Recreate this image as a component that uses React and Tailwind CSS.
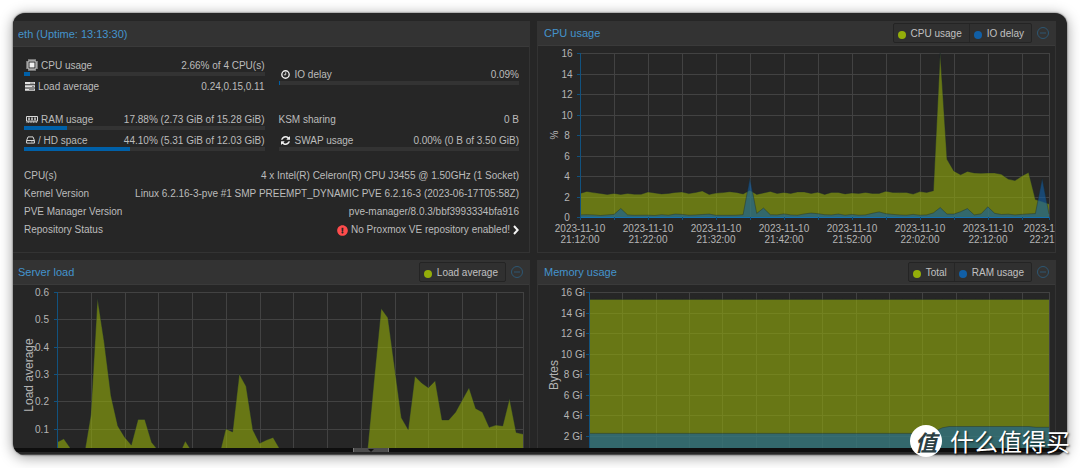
import React from "react";
import { FaExclamationCircle } from "react-icons/fa";

const GREEN = "#94ae0a";
const BLUE = "#115fa6";
const TOP = 7;
const BOTTOM = 171;
const SAMPLES = 69;

const CPU = [
  2.3, 2.5, 2.38, 2.3, 2.2, 2.3, 2.2, 2.3, 2.22, 2.22, 2.45, 2.35, 2.25, 2.3, 2.4, 2.45, 2.28, 2.4, 2.55, 2.2,
  2.33, 2.38, 2.47, 2.4, 2.25, 2.6, 2.2, 2.35, 2.5, 2.3, 2.4, 2.3, 2.45, 2.45, 2.3, 2.42, 2.2, 2.4, 2.4, 2.25,
  2.35, 2.3, 2.4, 2.3, 2.3, 2.52, 2.4, 2.38, 2.4, 2.23, 2.48, 2.4, 2.56, 16, 5.63, 4.5, 4.13, 4.45, 4.3, 4.27,
  4.3, 4.3, 4.17, 3.7, 3.55, 4.0, 4.35, 1.7, 1.5, 1.27,
];
const IO = [
  0.2, 0.22, 0.2, 0.15, 0.2, 0.25, 0.83, 0.2, 0.17, 0.18, 0.18, 0.15, 0.22, 0.18, 0.28, 0.25, 0.18, 0.2, 0.24, 0.28,
  0.17, 0.17, 0.17, 0.18, 0.22, 3.8, 0.35, 0.87, 0.22, 0.2, 0.3, 0.2, 0.18, 0.3, 0.38, 0.32, 0.22, 0.2, 0.28, 0.18,
  0.25, 0.18, 0.2, 0.36, 0.5, 0.32, 0.25, 0.2, 0.18, 0.25, 0.18, 0.2, 0.4, 0.92, 0.28, 0.28, 0.52, 0.82, 0.2, 0.3,
  1.0, 0.36, 0.24, 0.27, 0.2, 0.25, 0.3, 0.33, 3.75, 0.3,
];
const LOAD = [
  0.05, 0.063, 0.028, 0.01, 0, 0.15, 0.577, 0.414, 0.22, 0.11, 0.07, 0.04, 0.134, 0.134, 0.05, 0.02, 0, 0, 0, 0.055,
  0.015, 0, 0, 0, 0, 0.1, 0.088, 0.3, 0.255, 0.095, 0.047, 0.058, 0.068, 0.025, 0, 0, 0, 0, 0, 0,
  0, 0, 0, 0, 0, 0, 0.03, 0.29, 0.54, 0.506, 0.322, 0.14, 0.097, 0.292, 0.267, 0.25, 0.275, 0.132, 0.132, 0.16,
  0.205, 0.25, 0.174, 0.16, 0.105, 0.113, 0.11, 0.21, 0.086, 0.08,
];
const TOTAL = Array(70).fill(15.28);
const RAM = Array.from({ length: 70 }, (_, i) => (i < 52 ? 2.2 : i === 52 ? 2.45 : i === 53 ? 2.75 : i < 67 ? 2.88 : 2.8));

function Area({ values, max, left, right, color }) {
  const pts = values.map((v, i) => {
    const x = left + ((right - left) * i) / SAMPLES;
    const y = BOTTOM - ((BOTTOM - TOP) * v) / max;
    return `${x.toFixed(1)},${y.toFixed(1)}`;
  });
  return (
    <g>
      <polygon points={`${left},${BOTTOM} ${pts.join(" ")} ${right},${BOTTOM}`} fill={color} opacity="0.6" />
      <polyline points={pts.join(" ")} fill="none" stroke="#1c2b2f" strokeOpacity="0.4" strokeWidth="1" />
    </g>
  );
}

function Chart({ label, width, height, left, right, max, ticks, labelX, axisTitle, series, times }) {
  const columns = Array.from({ length: 14 }, (_, i) => Math.round(left + ((right - left) * i * 5) / SAMPLES));
  const yOf = (v) => Math.round(BOTTOM - ((BOTTOM - TOP) * v) / max);
  return (
    <svg
      viewBox={`0 0 ${width} ${height}`}
      className="block w-full overflow-hidden font-['Liberation_Sans',Arial,sans-serif]"
      role="img"
      aria-label={label}
    >
      {columns.concat(right).map((x) => (
        <path key={x} d={`M${x + 0.5} ${TOP}V${BOTTOM}`} stroke="#424242" />
      ))}
      {ticks.map(([v]) => (
        <path key={v} d={`M${left} ${yOf(v) + 0.5}H${right}`} stroke="#424242" />
      ))}
      {series.map((s) => (
        <Area key={s.color} values={s.values} color={s.color} max={max} left={left} right={right} />
      ))}
      <path d={`M${left + 0.5} ${TOP}V${BOTTOM}`} stroke="#11527f" />
      {ticks.map(([v, text]) => (
        <g key={v}>
          <path d={`M${left - 3} ${yOf(v) + 0.5}H${left}`} stroke="#11527f" />
          <text x={labelX} y={yOf(v) + 4} fontSize="10" fill="#b5b5b5" textAnchor="middle">
            {text}
          </text>
        </g>
      ))}
      <text
        transform={`translate(${axisTitle.x} ${axisTitle.y}) rotate(-90)`}
        fontSize={axisTitle.size}
        fill="#b5b5b5"
        textAnchor="middle"
      >
        {axisTitle.text}
      </text>
      {times && (
        <g>
          <path d={`M${left} ${BOTTOM + 0.5}H${right}`} stroke="#1270b0" />
          {columns.concat(right).map((x) => (
            <path key={x} d={`M${x + 0.5} ${BOTTOM}V${BOTTOM + 3}`} stroke="#11527f" />
          ))}
          {times.map((t, i) => {
            const x = i === times.length - 1 ? right : columns[i * 2];
            return (
              <text key={t} fontSize="10" fill="#b5b5b5" textAnchor="middle">
                <tspan x={x} y="186">2023-11-10</tspan>
                <tspan x={x} y="197">{t}</tspan>
              </text>
            );
          })}
        </g>
      )}
    </svg>
  );
}

function CpuIcon() {
  return (
    <svg viewBox="0 0 12 12" className="h-3 w-3" fill="none" stroke="#d8d8d8">
      <rect x="2" y="2" width="8" height="8" rx="1" strokeWidth="1" />
      <rect x="3.5" y="3.5" width="5" height="5" fill="#f0f0f0" stroke="none" />
      <path strokeWidth="0.9" d="M3 0v2M5 0v2M7 0v2M9 0v2M3 10v2M5 10v2M7 10v2M9 10v2M0 3h2M0 5h2M0 7h2M0 9h2M10 3h2M10 5h2M10 7h2M10 9h2" />
    </svg>
  );
}

function LoadIcon() {
  return (
    <svg viewBox="0 0 10 9" className="h-[9px] w-[10px]">
      <path fill="#e2e2e2" d="M0 0h10v2.3H0zM0 3.2h10v2.3H0zM0 6.4h10v2.3H0z" />
      <path fill="#666" d="M5 .8h4.2v.8H5zM7 4h2.2v.8H7zM4 7.2h5.2V8H4z" />
    </svg>
  );
}

function RamIcon() {
  return (
    <svg viewBox="0 0 12 7" className="h-[7px] w-3" fill="none" stroke="#d8d8d8">
      <path strokeWidth="1" d="M.5.5h11v4.6H.5z" />
      <path strokeWidth="1.5" d="M3 1.5v2.7M6 1.5v2.7M9 1.5v2.7" />
      <path strokeWidth="1.3" strokeDasharray="1 .6" d="M.5 6.2h11" />
    </svg>
  );
}

function DiskIcon() {
  return (
    <svg viewBox="0 0 9 8" className="h-2 w-[9px]" fill="none" stroke="#d8d8d8" strokeLinejoin="round">
      <path d="M.6 4.5L2 .9h5L8.4 4.5v2.6H.6zM.6 4.5h7.8" />
      <path strokeWidth=".8" d="M5 5.9h.8M6.500 5.900h.8" />
    </svg>
  );
}

function ClockIcon() {
  return (
    <svg viewBox="0 0 9 9" className="h-[9px] w-[9px]" fill="none" stroke="#e8e8e8">
      <circle cx="4.5" cy="4.5" r="3.7" strokeWidth="1.4" />
      <path d="M4.700 2.300v2.500H2.900" strokeWidth=".9" />
    </svg>
  );
}

function RefreshIcon() {
  return (
    <svg viewBox="0 128 1536 1536" className="h-[9px] w-[9px]" fill="#f0f0f0">
      <path d="M1511 1056q0 5-1 7-64 268-268 434.500t-478 166.500q-146 0-282.500-55t-243.500-157l-129 129q-19 19-45 19t-45-19-19-45v-448q0-26 19-45t45-19h448q26 0 45 19t19 45-19 45l-137 137q71 66 161 102t187 36q134 0 250-65t186-179q11-17 53-117 8-23 30-23h192q13 0 22.500 9.500t9.500 22.500zm25-800v448q0 26-19 45t-45 19h-448q-26 0-45-19t-19-45 19-45l138-138q-148-137-349-137-134 0-250 65t-186 179q-11 17-53 117-8 23-30 23h-199q-13 0-22.500-9.500t-9.500-22.500v-7q65-268 270-434.500t480-166.500q146 0 284 55.500t245 156.500l130-129q19-19 45-19t45 19 19 45z" />
    </svg>
  );
}

function Stat({ icon, name, value, percent }) {
  return (
    <div>
      <div className="flex h-[14px] items-center justify-between">
        <span className="flex items-center gap-[3px]">
          {icon}
          <span>{name}</span>
        </span>
        <span>{value}</span>
      </div>
      {percent !== undefined && (
        <div className="h-1 bg-[#333333]">
          <div className="h-full bg-[#0060a8]" style={{ width: `${percent}%` }} />
        </div>
      )}
    </div>
  );
}

function Header({ title, legend, className }) {
  return (
    <header className={`flex items-center justify-between border-b border-[#3a3a3a] bg-[#333333] pr-1.5 ${className}`}>
      <h2 className="text-[11px] leading-4 text-[#4493cd]">{title}</h2>
      {legend && (
        <div className="flex items-center gap-[5px]">
          <div className="flex divide-x divide-[#262626] rounded-xs border border-[#242424] bg-[#303030]">
            {legend.map(([name, dot]) => (
              <button key={name} type="button" className="flex h-[18px] items-center gap-[5px] pr-[7px] pl-1 text-[10px] text-[#c0c0c0]">
                <span className={`mt-[3px] h-2 w-2 rounded-full ${dot}`} />
                {name}
              </button>
            ))}
          </div>
          <button type="button" aria-label={`Collapse ${title}`} className="block">
            <svg viewBox="0 0 12 12" className="block h-3 w-3" fill="none" stroke="#2e5773">
              <circle cx="6" cy="6" r="5.500" />
              <path d="M3 6h6" />
            </svg>
          </button>
        </div>
      )}
    </header>
  );
}

const INFO = [
  ["CPU(s)", "4 x Intel(R) Celeron(R) CPU J3455 @ 1.50GHz (1 Socket)"],
  ["Kernel Version", "Linux 6.2.16-3-pve #1 SMP PREEMPT_DYNAMIC PVE 6.2.16-3 (2023-06-17T05:58Z)"],
  ["PVE Manager Version", "pve-manager/8.0.3/bbf3993334bfa916"],
];

const CPU_TICKS = [16, 14, 12, 10, 8, 6, 4, 2, 0].map((v) => [v, `${v}`]);
const LOAD_TICKS = [0.6, 0.5, 0.4, 0.3, 0.2, 0.1].map((v) => [v, `${v}`]);
const MEM_TICKS = [16, 14, 12, 10, 8, 6, 4, 2].map((v) => [v, `${v} Gi`]);
const TIMES = ["21:12:00", "21:22:00", "21:32:00", "21:42:00", "21:52:00", "22:02:00", "22:12:00", "22:21:00"];
const GREEN_DOT = "bg-[#94ae0a]";
const BLUE_DOT = "bg-[#115fa6]";

export default function App() {
  return (
    <div className="relative bg-white p-[13px] font-['Liberation_Sans',Arial,sans-serif] text-[10px] text-[#bcbcbc]">
      <main className="overflow-hidden rounded-xl bg-[#262626] pt-2 shadow-[0_0_2px_rgba(0,0,0,0.7),0_2px_14px_rgba(0,0,0,0.4)]">
        <div className="grid grid-cols-[517fr_519fr] gap-x-[7px] gap-y-[7px] pr-[11px]">
          <section className="border-r border-b border-[#333333]">
            <Header title="eth (Uptime: 13:13:30)" className="h-[26px] pl-[5px]" />
            <div className="px-[11px] pt-[11px] pr-[10px]">
              <div className="grid grid-cols-2 gap-x-[14px]">
                <div>
                  <div className="flex flex-col gap-[3px]">
                    <Stat icon={<span className="pl-0.5"><CpuIcon /></span>} name="CPU usage" value="2.66% of 4 CPU(s)" percent={2.66} />
                    <Stat icon={<span className="pl-px"><LoadIcon /></span>} name="Load average" value="0.24,0.15,0.11" />
                  </div>
                  <div className="mt-[19px] flex flex-col gap-[3px]">
                    <Stat icon={<span className="pl-0.5"><RamIcon /></span>} name="RAM usage" value="17.88% (2.73 GiB of 15.28 GiB)" percent={17.88} />
                    <Stat icon={<span className="pl-0.5"><DiskIcon /></span>} name="/ HD space" value="44.10% (5.31 GiB of 12.03 GiB)" percent={44.1} />
                  </div>
                </div>
                <div className="pt-[9px]">
                  <Stat icon={<span className="px-0.5"><ClockIcon /></span>} name="IO delay" value="0.09%" percent={0.09} />
                  <div className="mt-[27px] flex flex-col gap-[7px]">
                    <Stat name="KSM sharing" value="0 B" />
                    <Stat icon={<span className="px-0.5"><RefreshIcon /></span>} name="SWAP usage" value="0.00% (0 B of 3.50 GiB)" percent={0} />
                  </div>
                </div>
              </div>
              <dl className="mt-4 leading-[18px]">
                {INFO.map(([name, value]) => (
                  <div key={name} className="flex justify-between">
                    <dt>{name}</dt>
                    <dd>{value}</dd>
                  </div>
                ))}
                <div className="flex justify-between">
                  <dt>Repository Status</dt>
                  <dd className="flex items-center gap-[3px]">
                    <FaExclamationCircle className="h-[11px] w-[11px] text-[#ff4c4c]" />
                    No Proxmox VE repository enabled!
                    <svg viewBox="0 0 6 10" className="h-[10px] w-[6px]" fill="none" stroke="#f4f4f4" strokeWidth="2">
                      <path d="M1 1l3.700 4L1 9" />
                    </svg>
                  </dd>
                </div>
              </dl>
            </div>
          </section>

          <section className="border-x border-b border-[#333333]">
            <Header title="CPU usage" className="h-[25px] pl-1.5" legend={[["CPU usage", GREEN_DOT], ["IO delay", BLUE_DOT]]} />
            <Chart
              label="CPU usage"
              width={517}
              height={206}
              left={42}
              right={511}
              max={16}
              ticks={CPU_TICKS}
              labelX={29}
              axisTitle={{ text: "%", x: 20, y: 89, size: 10 }}
              series={[{ values: CPU, color: GREEN }, { values: IO, color: BLUE }]}
              times={TIMES}
            />
          </section>

          <section className="border-r border-[#333333]">
            <Header title="Server load" className="h-[25px] pl-[5px]" legend={[["Load average", GREEN_DOT]]} />
            <Chart
              label="Server load"
              width={516}
              height={163}
              left={44}
              right={510}
              max={0.6}
              ticks={LOAD_TICKS}
              labelX={29}
              axisTitle={{ text: "Load average", x: 20, y: 90, size: 12 }}
              series={[{ values: LOAD, color: GREEN }]}
            />
          </section>

          <section className="border-x border-[#333333]">
            <Header title="Memory usage" className="h-[25px] pl-1.5" legend={[["Total", GREEN_DOT], ["RAM usage", BLUE_DOT]]} />
            <Chart
              label="Memory usage"
              width={517}
              height={163}
              left={51}
              right={511}
              max={16}
              ticks={MEM_TICKS}
              labelX={35}
              axisTitle={{ text: "Bytes", x: 20, y: 90, size: 12 }}
              series={[{ values: TOTAL, color: GREEN }, { values: RAM, color: BLUE }]}
            />
          </section>
        </div>
        <div className="flex h-1 bg-[#0e0e0e] pl-[340px]">
          <div className="flex w-9 justify-center border-x border-[#777777] bg-[#4c4c4c]">
            <svg viewBox="0 0 6 4" className="h-1 w-1.5" fill="#111111">
              <path d="M0 1h6L3 4z" />
            </svg>
          </div>
        </div>
        <div className="h-[3px] border-b border-[#4a4a4a]" />
      </main>

      <div className="absolute right-2.5 bottom-[11px] flex items-center gap-2 font-['Noto_Sans_CJK_SC',sans-serif] text-white">
        <span className="flex h-8 w-8 items-center justify-center rounded-full bg-white text-[22px] leading-8 font-bold text-[#2c4044] italic">
          值
        </span>
        <span className="text-2xl leading-8 [text-shadow:1px_1px_2px_rgba(0,0,0,0.7)]">什么值得买</span>
      </div>
    </div>
  );
}
